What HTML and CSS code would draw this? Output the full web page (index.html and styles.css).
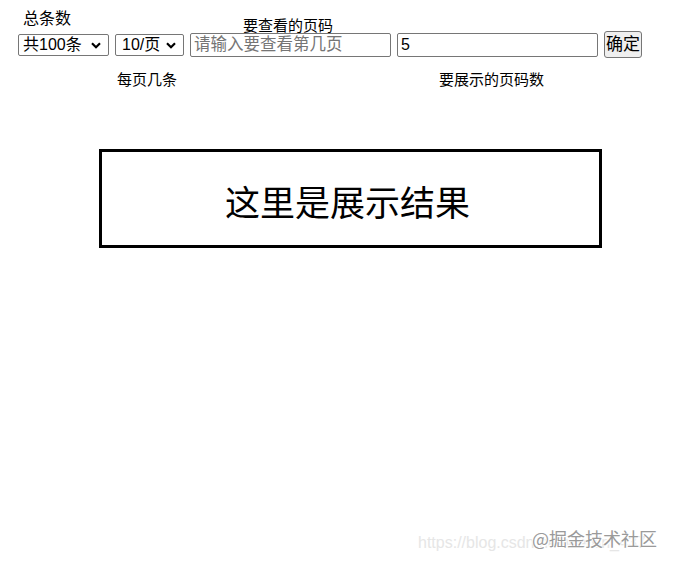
FILE: index.html
```html
<!DOCTYPE html>
<html lang="zh-CN">
<head>
<meta charset="utf-8">
<title>分页</title>
<link rel="stylesheet" href="styles.css">
</head>
<body>
<div class="page">
  <div class="toolbar">
    <span class="lbl lbl-total">总条数</span>
    <span class="lbl lbl-page">要查看的页码</span>
    <select class="ctl sel sel-total"><option>共100条</option></select>
    <select class="ctl sel sel-size"><option>10/页</option></select>
    <input class="ctl inp inp-page" type="text" placeholder="请输入要查看第几页">
    <input class="ctl inp inp-count" type="text" value="5">
    <button class="ctl btn">确定</button>
    <span class="lbl lbl-size">每页几条</span>
    <span class="lbl lbl-count">要展示的页码数</span>
  </div>
  <div class="result">这里是展示结果</div>
</div>
<div class="watermark">
  <span class="wm-url">https://blog.csdn.net/weixin_437</span>
  <span class="wm-brand">@掘金技术社区</span>
</div>
</body>
</html>
```

FILE: styles.css
```css
html, body {
  margin: 0;
  padding: 0;
  background: #fff;
}
body {
  font-family: "Noto Sans CJK SC", "Noto Sans", sans-serif;
  color: #000;
  width: 675px;
  height: 563px;
  position: relative;
  overflow: hidden;
}
.page {
  padding-left: 18px;
}
.toolbar {
  display: grid;
  grid-template-columns: 91px 69px 201px 201px 38px;
  grid-template-rows: 31px 28px 30px;
  column-gap: 6px;
  align-items: center;
}
.lbl {
  line-height: 1;
  font-size: 15px;
  white-space: nowrap;
}
.lbl-total {
  grid-row: 1;
  grid-column: 1;
  font-size: 16px;
  align-self: start;
  margin-top: 9px;
  margin-left: 5px;
}
.lbl-page {
  grid-row: 1;
  grid-column: 3;
  align-self: start;
  margin-top: 17px;
  margin-left: 53px;
}
.lbl-size {
  grid-row: 3;
  grid-column: 2;
  align-self: start;
  margin-top: 12px;
  margin-left: 2px;
}
.lbl-count {
  grid-row: 3;
  grid-column: 4;
  align-self: start;
  margin-top: 12px;
  margin-left: 42px;
}
.ctl {
  grid-row: 2;
  font-family: "Liberation Sans", "Noto Sans CJK SC", sans-serif;
  font-size: 16px;
  margin: 0;
  box-sizing: border-box;
  color: #000;
}
.sel {
  -webkit-appearance: none;
  appearance: none;
  height: 22px;
  padding: 0 0 0 4px;
  border: 1px solid #767676;
  border-radius: 2px;
  background-color: #fff;
  background-image: url("data:image/svg+xml;utf8,<svg xmlns='http://www.w3.org/2000/svg' width='10' height='7' viewBox='0 0 10 7'><path d='M1 1.2 L5 5.2 L9 1.2' fill='none' stroke='black' stroke-width='2.2'/></svg>");
  background-repeat: no-repeat;
  background-position: right 7px center;
  background-size: 10px 7px;
  line-height: 20px;
}
.sel-total { grid-column: 1; width: 91px; }
.sel-size { grid-column: 2; width: 69px; padding-left: 6px; }
.inp {
  height: 24px;
  width: 201px;
  border: 1px solid #767676;
  border-radius: 2px;
  padding: 0 3px;
  line-height: 22px;
}
.inp::placeholder {
  color: #757575;
  font-family: "Noto Sans CJK SC", sans-serif;
  font-size: 16.5px;
}
.inp-page { grid-column: 3; }
.inp-count { grid-column: 4; }
.btn {
  grid-column: 5;
  height: 27px;
  width: 38px;
  padding: 0;
  border: 1px solid #767676;
  border-radius: 3px;
  background: #efefef;
  align-self: start;
  line-height: 25px;
  font-size: 17px;
}
.result {
  margin: 60px 0 0 81px;
  width: 503px;
  height: 99px;
  box-sizing: border-box;
  border: 3px solid #000;
  display: flex;
  align-items: center;
  justify-content: center;
  font-size: 35px;
  line-height: 1;
  padding: 4px 6px 0 0;
}
.watermark {
  position: absolute;
  left: 418px;
  top: 526px;
  width: 250px;
  height: 30px;
}
.wm-url {
  position: absolute;
  left: 0;
  top: 8px;
  font-family: "Liberation Sans", sans-serif;
  font-size: 16px;
  color: #e6e6e6;
  white-space: nowrap;
}
.wm-brand {
  position: absolute;
  left: 114px;
  top: 2px;
  font-size: 18px;
  line-height: 1.2;
  color: #9a9a9a;
  white-space: nowrap;
  text-shadow: 1px 1px 0 #fff, -1px -1px 0 #fff;
}
```
